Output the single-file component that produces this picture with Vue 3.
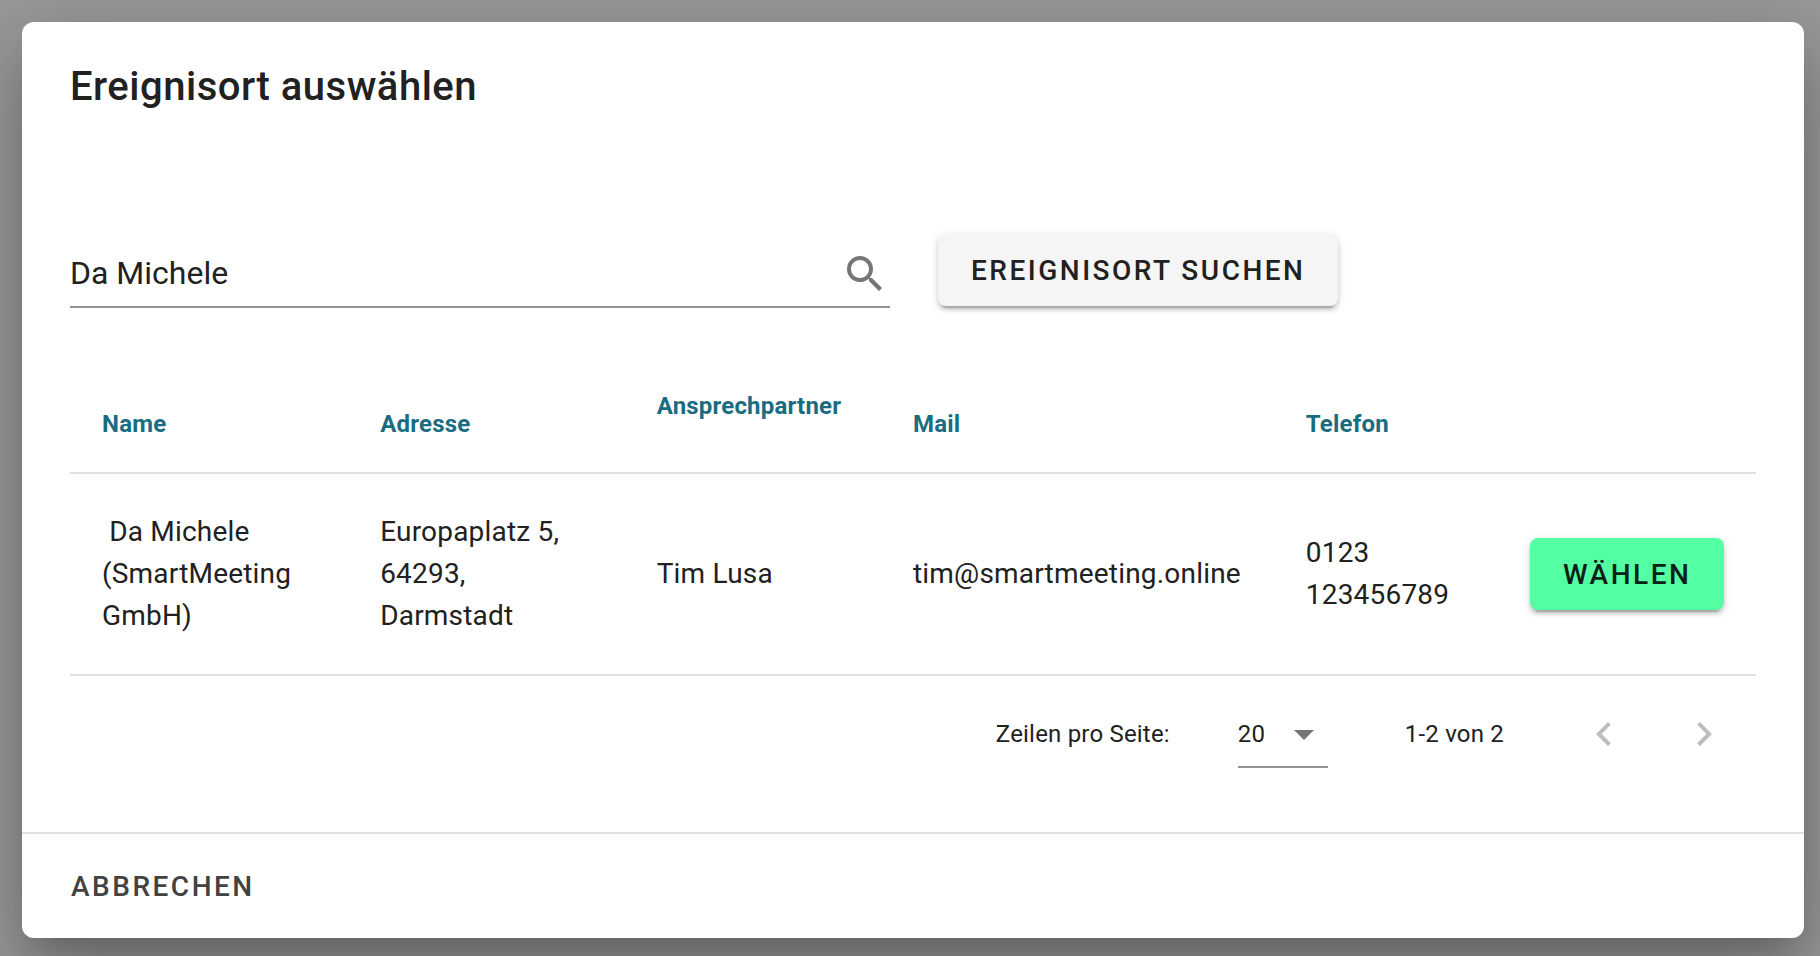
<script setup>
import { ref } from 'vue'

const query = ref('Da Michele')
const perPage = ref(20)
const locations = [
  {
    name: '\u00a0Da Michele (SmartMeeting GmbH)',
    address: 'Europaplatz 5, 64293, Darmstadt',
    contact: 'Tim Lusa',
    mail: 'tim@smartmeeting.online',
    phone: '0123 123456789',
  },
]
</script>

<template>
  <div class="overlay">
    <section class="dialog" role="dialog" aria-labelledby="dialog-title">
      <h1 id="dialog-title" class="title">Ereignisort auswählen</h1>

      <div class="content">
        <form class="search" @submit.prevent>
          <div class="field">
            <input v-model="query" type="text" aria-label="Ereignisort" />
            <svg class="icon" viewBox="0 0 24 24" aria-hidden="true">
              <path d="M9.5,3A6.5,6.5 0 0,1 16,9.5C16,11.11 15.41,12.59 14.44,13.73L14.71,14H15.5L20.5,19L19,20.5L14,15.5V14.71L13.73,14.44C12.59,15.41 11.11,16 9.5,16A6.5,6.5 0 0,1 3,9.5A6.5,6.5 0 0,1 9.5,3M9.5,5C7,5 5,7 5,9.5C5,12 7,14 9.5,14C12,14 14,12 14,9.5C14,7 12,5 9.5,5Z" />
            </svg>
          </div>
          <button class="btn raised" type="submit">Ereignisort suchen</button>
        </form>

        <table class="table">
          <colgroup>
            <col class="col-name" />
            <col class="col-address" />
            <col class="col-contact" />
            <col class="col-mail" />
            <col class="col-phone" />
            <col class="col-action" />
          </colgroup>
          <thead>
            <tr>
              <th scope="col">Name</th>
              <th scope="col">Adresse</th>
              <th scope="col">Ansprechpartner<span class="sort-slot"></span></th>
              <th scope="col">Mail</th>
              <th scope="col">Telefon</th>
              <td></td>
            </tr>
          </thead>
          <tbody>
            <tr v-for="item in locations" :key="item.mail">
              <td>{{ item.name }}</td>
              <td>{{ item.address }}</td>
              <td>{{ item.contact }}</td>
              <td>{{ item.mail }}</td>
              <td>{{ item.phone }}</td>
              <td class="action"><button class="btn raised accent" type="button">Wählen</button></td>
            </tr>
          </tbody>
        </table>

        <div class="pagination">
          <label for="per-page">Zeilen pro Seite:</label>
          <div class="select">
            <select id="per-page" v-model="perPage">
              <option :value="10">10</option>
              <option :value="20">20</option>
              <option :value="50">50</option>
            </select>
            <svg class="icon caret" viewBox="0 0 24 24" aria-hidden="true"><path d="M7,10L12,15L17,10H7Z" /></svg>
          </div>
          <span class="range">1-2 von 2</span>
          <div class="pager">
            <button class="page-btn" type="button" aria-label="Vorherige Seite" disabled>
              <svg class="icon" viewBox="0 0 24 24"><path d="M15.41,16.58L10.83,12L15.41,7.41L14,6L8,12L14,18L15.41,16.58Z" /></svg>
            </button>
            <button class="page-btn" type="button" aria-label="Nächste Seite" disabled>
              <svg class="icon" viewBox="0 0 24 24"><path d="M8.59,16.58L13.17,12L8.59,7.41L10,6L16,12L10,18L8.59,16.58Z" /></svg>
            </button>
          </div>
        </div>
      </div>

      <footer class="actions">
        <button class="btn plain" type="button">Abbrechen</button>
      </footer>
    </section>
  </div>
</template>

<style>
body {
  margin: 0;
  background: #999;
}
</style>

<style scoped>
*, *::before, *::after {
  box-sizing: border-box;
}
.overlay {
  min-height: 100vh;
  padding: 22px 16px 18px 22px;
  display: flex;
  overflow: hidden;
  font-family: Roboto, "Liberation Sans", sans-serif;
  font-size: 28px;
  line-height: 42px;
  color: #212121;
}
.dialog {
  flex: 1;
  min-width: 0;
  display: flex;
  flex-direction: column;
  background: #fff;
  border-radius: 12px;
  box-shadow: 0 22px 30px -14px rgba(0, 0, 0, .2), 0 48px 76px 6px rgba(0, 0, 0, .14), 0 18px 92px 16px rgba(0, 0, 0, .12);
}
.title {
  margin: 0;
  padding: 33px 48px 19px;
  font-size: 40px;
  line-height: 64px;
  font-weight: 500;
  letter-spacing: .0125em;
}
.content {
  flex: 1;
  padding: 96px 48px 40px;
  letter-spacing: .007em;
}
.search {
  display: flex;
  align-items: flex-end;
  gap: 48px;
  margin-bottom: 70px;
}
.field {
  width: 820px;
  display: flex;
  align-items: center;
  height: 66px;
  padding-right: 1px;
  border-bottom: 2px solid #949494;
}
.field input {
  flex: 1;
  min-width: 0;
  height: 64px;
  padding: 0 0 2px;
  border: 0;
  outline: 0;
  background: none;
  color: inherit;
  font: inherit;
  font-size: 32px;
  letter-spacing: normal;
}
.icon {
  display: block;
  flex: none;
  width: 48px;
  height: 48px;
  fill: #757575;
}
.btn {
  height: 72px;
  padding: 2px 33px 0;
  border: 0;
  border-radius: 8px;
  background: none;
  color: #212121;
  font: inherit;
  font-weight: 500;
  letter-spacing: .0893em;
  text-transform: uppercase;
  white-space: nowrap;
}
.raised {
  margin-bottom: 2px;
  background: #f5f5f5;
  box-shadow: 0 6px 2px -4px rgba(0, 0, 0, .2), 0 4px 4px 0 rgba(0, 0, 0, .14), 0 2px 10px 0 rgba(0, 0, 0, .12);
}
.accent {
  margin: 0;
  background: #54ffa4;
  color: #0b2115;
}
.table {
  width: 100%;
  table-layout: fixed;
  border-collapse: separate;
  border-spacing: 0;
}
.col-name { width: 16.5%; }
.col-address { width: 16.4%; }
.col-contact { width: 15.2%; }
.col-mail { width: 23.3%; }
.col-phone { width: 13.3%; }
.col-action { width: 15.3%; }
.table th,
.table td {
  padding: 0 32px;
  border-bottom: 2px solid #e0e0e0;
  text-align: left;
  vertical-align: middle;
}
.table th {
  height: 96px;
  padding-bottom: 2px;
  color: #1a6c81;
  font-size: 24px;
  line-height: 36px;
  font-weight: 700;
}
.sort-slot {
  display: block;
  height: 36px;
}
.table tbody td {
  height: 202px;
}
.table .action {
  padding-right: 0;
}
.action .btn {
  display: block;
}
.pagination {
  height: 116px;
  padding-right: 16px;
  display: flex;
  align-items: center;
  justify-content: flex-end;
  font-size: 24px;
}
.select {
  position: relative;
  width: 90px;
  height: 68px;
  margin: 0 77px 0 68px;
  border-bottom: 2px solid #949494;
}
.select select {
  width: 100%;
  height: 66px;
  padding: 2px 0 0;
  border: 0;
  outline: 0;
  appearance: none;
  background: none;
  color: inherit;
  font: inherit;
  letter-spacing: inherit;
}
.caret {
  position: absolute;
  top: 10px;
  right: 0;
  pointer-events: none;
}
.range {
  margin-right: 64px;
}
.pager {
  display: flex;
  gap: 28px;
}
.page-btn {
  width: 72px;
  height: 72px;
  padding: 12px;
  border: 0;
  background: none;
}
.page-btn .icon {
  fill: #bdbdbd;
}
.actions {
  padding: 16px;
  border-top: 2px solid #e0e0e0;
}
.plain {
  display: block;
  color: #424242;
}
</style>
